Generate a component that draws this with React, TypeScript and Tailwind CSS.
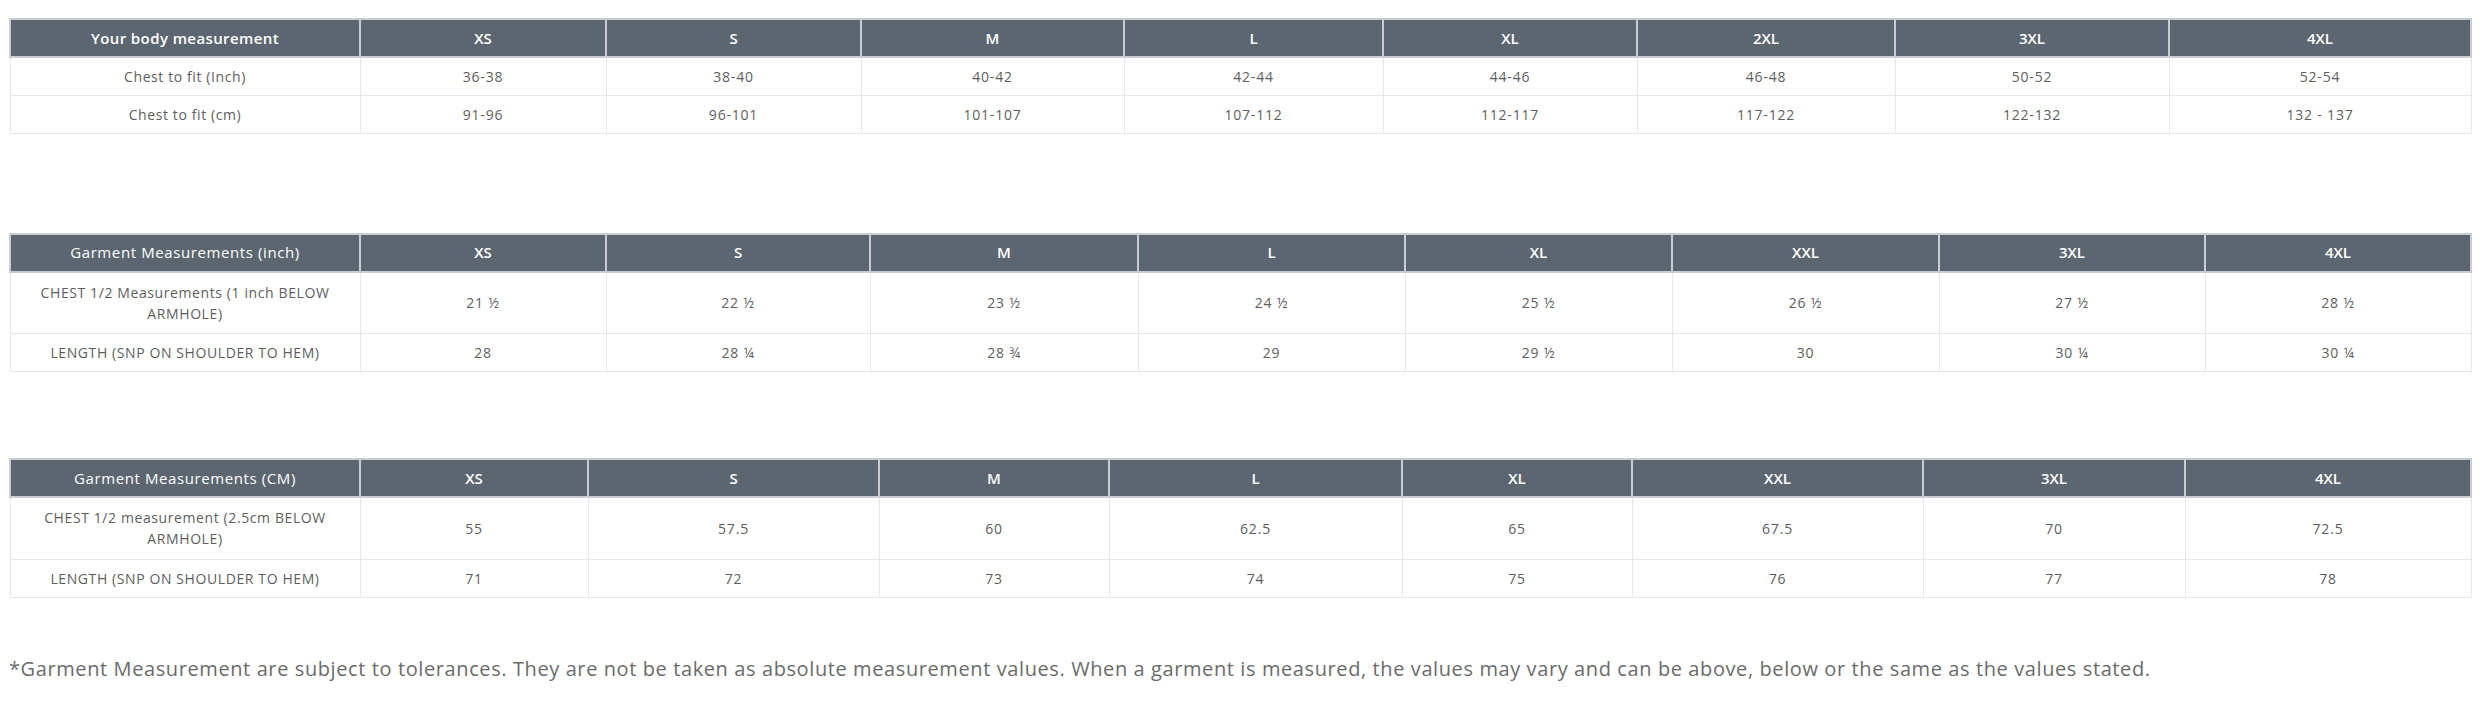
import React from 'react';

type SizeTable = {
  title: string;
  titleWeight: string;
  sizes: string[];
  widths: number[];
  rows: { label: React.ReactNode; values: string[]; tall?: boolean }[];
};

const tables: SizeTable[] = [
  {
    title: 'Your body measurement',
    titleWeight: 'font-semibold tracking-[0.4px]',
    sizes: ['XS', 'S', 'M', 'L', 'XL', '2XL', '3XL', '4XL'],
    widths: [350, 246, 255, 263, 259, 254, 258, 274, 302],
    rows: [
      { label: 'Chest to fit (Inch)', values: ['36-38', '38-40', '40-42', '42-44', '44-46', '46-48', '50-52', '52-54'] },
      { label: 'Chest to fit (cm)', values: ['91-96', '96-101', '101-107', '107-112', '112-117', '117-122', '122-132', '132 - 137'] },
    ],
  },
  {
    title: 'Garment Measurements (inch)',
    titleWeight: 'font-medium tracking-[0.6px]',
    sizes: ['XS', 'S', 'M', 'L', 'XL', 'XXL', '3XL', '4XL'],
    widths: [350, 246, 264, 268, 267, 267, 267, 266, 266],
    rows: [
      {
        label: (
          <>
            CHEST 1/2 Measurements (1 inch BELOW
            <br />
            ARMHOLE)
          </>
        ),
        values: ['21 ½', '22 ½', '23 ½', '24 ½', '25 ½', '26 ½', '27 ½', '28 ½'],
        tall: true,
      },
      { label: 'LENGTH (SNP ON SHOULDER TO HEM)', values: ['28', '28 ¼', '28 ¾', '29', '29 ½', '30', '30 ¼', '30 ¼'] },
    ],
  },
  {
    title: 'Garment Measurements (CM)',
    titleWeight: 'font-medium tracking-[0.6px]',
    sizes: ['XS', 'S', 'M', 'L', 'XL', 'XXL', '3XL', '4XL'],
    widths: [350, 228, 291, 230, 293, 230, 291, 262, 286],
    rows: [
      {
        label: (
          <>
            CHEST 1/2 measurement (2.5cm BELOW
            <br />
            ARMHOLE)
          </>
        ),
        values: ['55', '57.5', '60', '62.5', '65', '67.5', '70', '72.5'],
        tall: true,
      },
      { label: 'LENGTH (SNP ON SHOULDER TO HEM)', values: ['71', '72', '73', '74', '75', '76', '77', '78'] },
    ],
  },
];

function SizeChart({ table, className }: { table: SizeTable; className: string }) {
  return (
    <table className={`w-[2461px] table-fixed border-collapse border border-[#e6e7ee] ${className}`}>
      <colgroup>
        {table.widths.map((w, i) => (
          <col key={i} style={{ width: w }} />
        ))}
      </colgroup>
      <thead>
        <tr className="h-[38px] bg-[#5c6670] text-white text-[15px]">
          <th className={`border-2 border-[#c9ccd2] px-2 ${table.titleWeight}`}>{table.title}</th>
          {table.sizes.map(s => (
            <th key={s} className="border-2 border-[#c9ccd2] px-2 font-semibold">
              {s}
            </th>
          ))}
        </tr>
      </thead>
      <tbody className="text-[14px] tracking-[0.8px] text-[#5e5e5e]">
        {table.rows.map((row, i) => (
          <tr key={i} className={row.tall ? 'h-[62px]' : 'h-[38px]'}>
            <td className="border border-[#e6e7ee] px-2 text-center leading-[21px] tracking-[0.6px]">{row.label}</td>
            {row.values.map((v, j) => (
              <td key={j} className="border border-[#e6e7ee] px-2 text-center">
                {v}
              </td>
            ))}
          </tr>
        ))}
      </tbody>
    </table>
  );
}

export default function App() {
  return (
    <div className="min-h-[704px] w-[2483px] bg-white pl-[9px] pt-[18px] font-['Open_Sans',sans-serif]">
      <SizeChart table={tables[0]} className="" />
      <SizeChart table={tables[1]} className="mt-[99px]" />
      <SizeChart table={tables[2]} className="mt-[86px]" />
      <p className="mt-[57px] text-[20px] leading-[27px] tracking-[0.6px] text-[#6b6b6b]">
        *Garment Measurement are subject to tolerances. They are not be taken as absolute measurement values. When a garment is measured, the values may vary and can be above, below or the same as the values stated.
      </p>
    </div>
  );
}
